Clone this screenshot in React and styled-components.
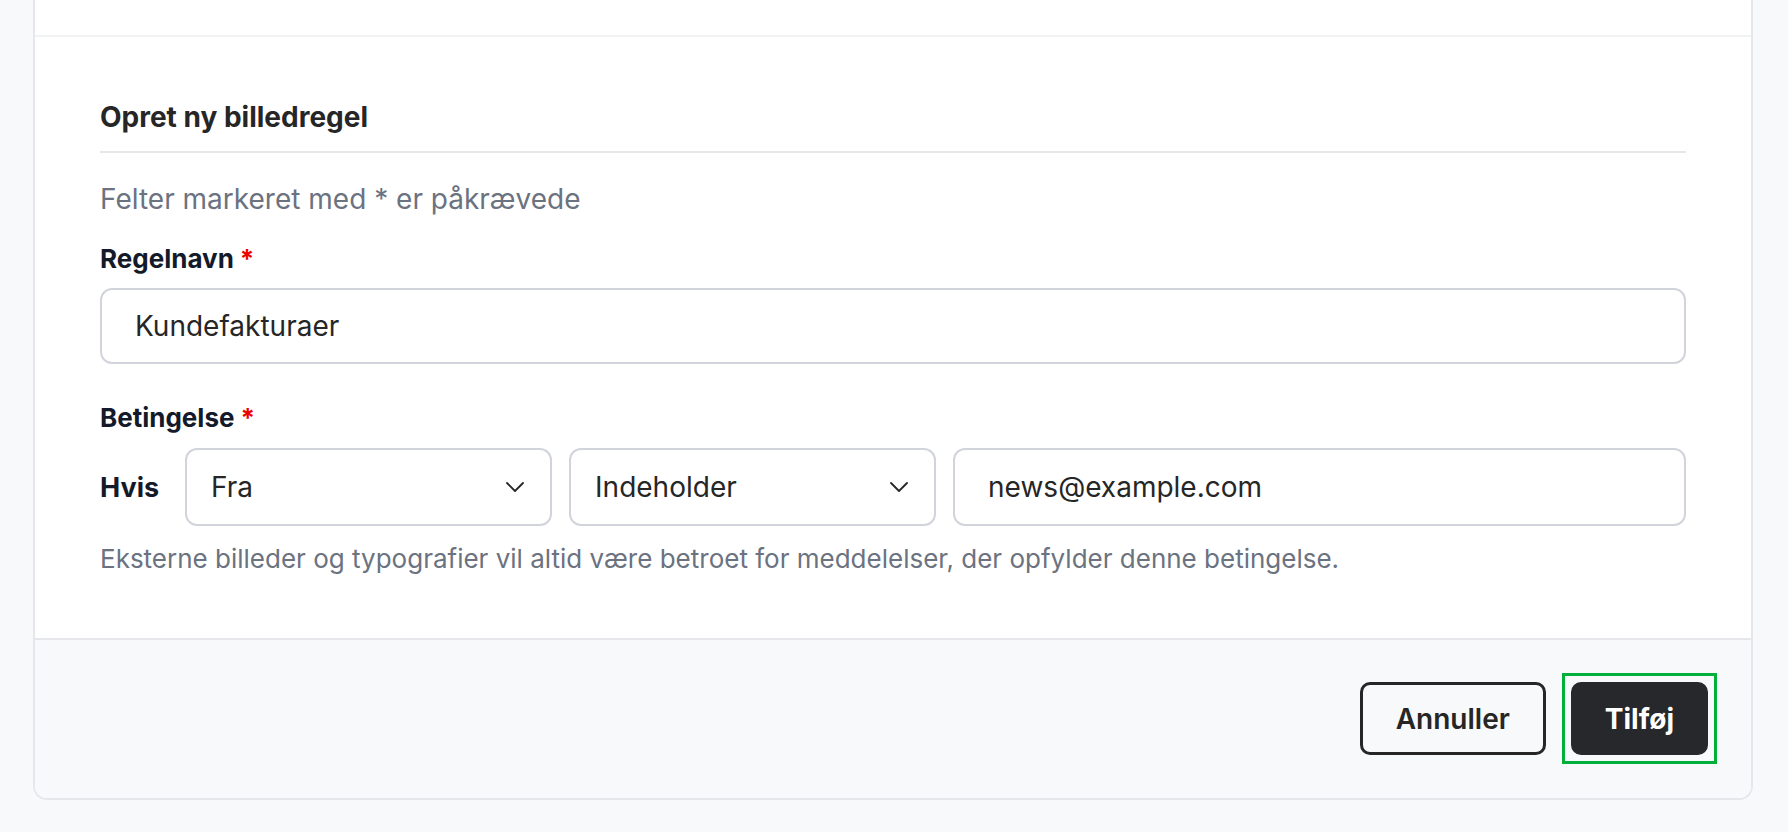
import React from 'react';
import styled, { createGlobalStyle } from 'styled-components';

const GlobalStyle = createGlobalStyle`
	* {
		box-sizing: border-box;
	}
	body {
		margin: 0;
		background: #f8f9fb;
		font-family: Inter, 'Noto Sans', 'Liberation Sans', sans-serif;
		color: #262626;
	}
`;

const Card = styled.div`
	margin-left: 33px;
	width: 1720px;
	background: #fff;
	border: 2px solid #e5e7eb;
	border-top: none;
	border-radius: 0 0 14px 14px;
	overflow: hidden;
`;

const TopStrip = styled.div`
	height: 37px;
	border-bottom: 2px solid #f1f2f4;
`;

const Body = styled.div`
	padding: 62px 65px 62px;
	display: flex;
	flex-direction: column;
`;

const Title = styled.h2`
	margin: 0;
	font-size: 28px;
	line-height: 36px;
	font-weight: 700;
	color: #262626;
	padding-bottom: 16px;
	border-bottom: 2px solid #e5e7eb;
`;

const Note = styled.p`
	margin: ${(p) => p.$top || 0}px 0 0;
	font-size: ${(p) => p.$size || 28}px;
	line-height: 34px;
	color: #6b7280;
`;

const Label = styled.label`
	display: block;
	margin-top: ${(p) => p.$top}px;
	font-size: 26px;
	line-height: 34px;
	font-weight: 700;
	color: #141a29;
`;

const Required = styled.span`
	color: #ee0000;
	margin-left: 6px;
`;

const TextInput = styled.input`
	display: block;
	width: 100%;
	height: ${(p) => p.$height || 76}px;
	margin-top: ${(p) => p.$top || 0}px;
	padding: 0 33px;
	border: 2px solid #d1d5db;
	border-radius: 12px;
	background: #fff;
	font-family: inherit;
	font-size: 28px;
	color: #262626;
	outline: none;
`;

const ConditionRow = styled.div`
	display: flex;
	align-items: center;
	gap: 17px;
	margin-top: 13px;
`;

const RowLabel = styled.span`
	font-size: 27px;
	font-weight: 700;
	color: #141a29;
	margin-right: 9px;
`;

const SelectWrap = styled.div`
	position: relative;
	width: 367px;
	flex: none;
`;

const Select = styled.select`
	appearance: none;
	width: 100%;
	height: 78px;
	padding: 0 60px 0 24px;
	border: 2px solid #d1d5db;
	border-radius: 12px;
	background: #fff;
	font-family: inherit;
	font-size: 28px;
	color: #262626;
	outline: none;
`;

const Chevron = styled.svg`
	position: absolute;
	right: 28px;
	top: 50%;
	margin-top: -5px;
	pointer-events: none;
`;

const Footer = styled.div`
	display: flex;
	justify-content: flex-end;
	align-items: center;
	gap: 16px;
	padding: 33px 34px 34px;
	background: #f8f9fb;
	border-top: 2px solid #e5e7eb;
`;

const Button = styled.button`
	height: 73px;
	padding: 0 ${(p) => (p.$primary ? 31 : 33)}px;
	border-radius: 10px;
	border: 3px solid ${(p) => (p.$primary ? '#27282b' : '#262626')};
	background: ${(p) => (p.$primary ? '#27282b' : 'transparent')};
	color: ${(p) => (p.$primary ? '#fff' : '#262626')};
	font-family: inherit;
	font-size: 28px;
	font-weight: ${(p) => (p.$primary ? 700 : 600)};
	cursor: pointer;
`;

const FocusRing = styled.span`
	display: inline-flex;
	padding: 6px;
	border: 3px solid #00b03a;
`;

const ChevronDown = () => (
	<Chevron width="18" height="10" viewBox="0 0 18 10" fill="none">
		<polyline points="1,1 9,9 17,1" stroke="#262626" strokeWidth="1.8" strokeLinecap="round" strokeLinejoin="round" />
	</Chevron>
);

const Dropdown = ({ value, options }) => (
	<SelectWrap>
		<Select defaultValue={value}>
			{options.map((o) => (
				<option key={o}>{o}</option>
			))}
		</Select>
		<ChevronDown />
	</SelectWrap>
);

export default function App() {
	return (
		<>
			<GlobalStyle />
			<Card>
				<TopStrip />
				<Body>
					<Title>Opret ny billedregel</Title>
					<Note $top={29}>Felter markeret med * er påkrævede</Note>

					<Label $top={26}>
						Regelnavn<Required>*</Required>
					</Label>
					<TextInput $top={12} defaultValue="Kundefakturaer" />

					<Label $top={37}>
						Betingelse<Required>*</Required>
					</Label>
					<ConditionRow>
						<RowLabel>Hvis</RowLabel>
						<Dropdown value="Fra" options={['Fra', 'Til', 'Emne']} />
						<Dropdown value="Indeholder" options={['Indeholder', 'Er lig med', 'Starter med']} />
						<TextInput $height={78} defaultValue="news@example.com" />
					</ConditionRow>
					<Note $top={16} $size={26}>
						Eksterne billeder og typografier vil altid være betroet for meddelelser, der opfylder denne betingelse.
					</Note>
				</Body>
				<Footer>
					<Button>Annuller</Button>
					<FocusRing>
						<Button $primary>Tilføj</Button>
					</FocusRing>
				</Footer>
			</Card>
		</>
	);
}
